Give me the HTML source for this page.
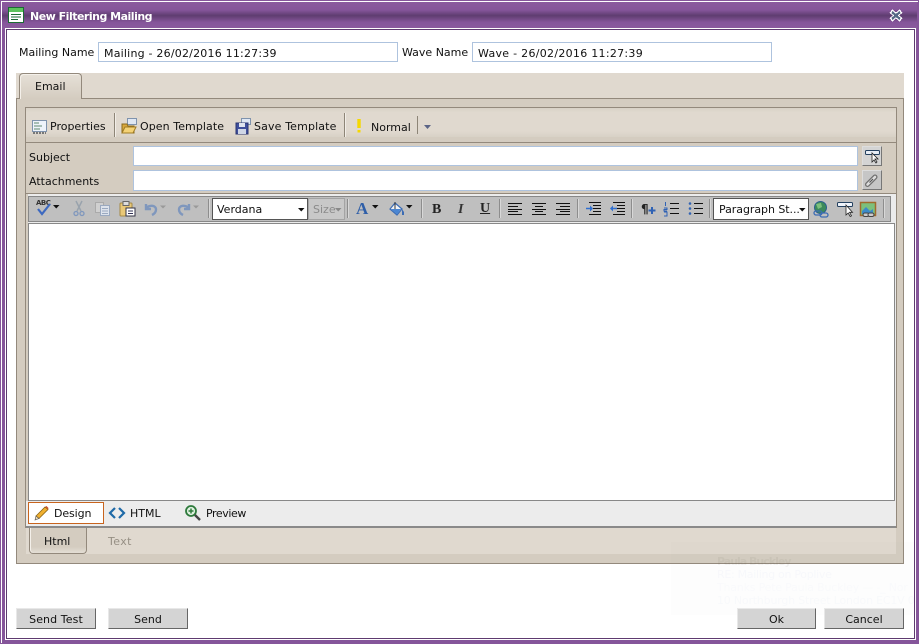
<!DOCTYPE html>
<html><head><meta charset="utf-8"><style>
html,body{margin:0;padding:0;background:#fff}
#w{position:relative;width:919px;height:644px;overflow:hidden;background:#fff;font:11px "DejaVu Sans",Verdana,sans-serif;color:#111}
.a{position:absolute;box-sizing:border-box}
.t{position:absolute;white-space:nowrap;line-height:14px;margin-top:1px}
svg{position:absolute;overflow:visible}
.inp{position:absolute;box-sizing:border-box;background:#fff;border:1px solid #aec3de}
.sep{position:absolute;width:2px;background:linear-gradient(90deg,#8d8d8d 50%,#d8d8d8 50%)}
.btn{position:absolute;box-sizing:border-box;background:#d4d4d4;border:1px solid;border-color:#e8e8e8 #666 #666 #e8e8e8;height:21px;text-align:center;line-height:21px}
</style></head><body><div id="w">
<!-- frame -->
<div class="a" style="left:0;top:0;width:919px;height:644px;background:#85559a"></div>
<div class="a" style="left:1px;top:1px;width:917px;height:642px;border:1px solid #fff;border-bottom:0;border-right:0"></div>
<div class="a" style="left:2px;top:2px;width:915px;height:27px;background:linear-gradient(#8b5a9e 0,#85559a 30%,#5f3d70 50%,#85559a 75%,#8b5a9e 100%)"></div>
<div class="a" style="left:5px;top:28px;width:911px;height:612px;background:#fff"></div>
<div class="a" style="left:6px;top:29px;width:909px;height:610px;background:#fff;border:1px solid #5e3a70"></div>
<!-- title -->
<svg style="left:8px;top:7px" width="16" height="16"><rect x=".5" y=".5" width="15" height="15" fill="#fff" stroke="#1c6b34"/><rect x="1" y="1" width="14" height="4" fill="#5cc35c"/><path d="M3 7.500h10M3 10h10M3 12.500h7" stroke="#1c6b34"/></svg>
<div class="t" style="left:30px;top:9px;color:#fff;font-weight:bold;font-size:11px;letter-spacing:-.5px">New Filtering Mailing</div>
<svg style="left:890px;top:10px" width="12" height="11" shape-rendering="crispEdges"><path d="M1 1L11 10M11 1L1 10" stroke="#fff" stroke-width="4.500"/><path d="M2 2L10 9M10 2L2 9" stroke="#566a86" stroke-width="2.400"/></svg>
<!-- names -->
<div class="t" style="left:19px;top:45px">Mailing Name</div>
<div class="inp" style="left:98px;top:42px;width:300px;height:20px"></div>
<div class="t" style="left:104px;top:46px;letter-spacing:.21px">Mailing - 26/02/2016 11:27:39</div>
<div class="t" style="left:402px;top:45px">Wave Name</div>
<div class="inp" style="left:472px;top:42px;width:300px;height:20px"></div>
<div class="t" style="left:478px;top:46px;letter-spacing:.29px">Wave - 26/02/2016 11:27:39</div>
<!-- tab strip -->
<div class="a" style="left:16px;top:73px;width:888px;height:26px;background:#e0d9cf"></div>
<div class="a" style="left:16px;top:98px;width:888px;height:466px;background:#d4ccc0;border:1px solid #93897c"></div>
<div class="a" style="left:19px;top:73px;width:63px;height:26px;background:linear-gradient(#e6e0d7,#d4ccc0);border:1px solid #93897c;border-bottom:0;border-radius:4px 4px 0 0;box-shadow:inset 1px 1px 0 #f4f0ea"></div>
<div class="t" style="left:35px;top:79px">Email</div>
<!-- inner box -->
<div class="a" style="left:25px;top:107px;width:872px;height:421px;background:#d4ccc0;border:1px solid #93897c;border-bottom:0"></div>
<div class="a" style="left:26px;top:108px;width:870px;height:29px;background:linear-gradient(#d8d1c6,#e0d9cf 15%,#e0d9cf 80%,#d8d1c6)"></div>
<div class="a" style="left:26px;top:137px;width:870px;height:5px;background:#d4ccc0"></div>
<div class="a" style="left:26px;top:142px;width:870px;height:1px;background:#93897c"></div>
<!-- main toolbar -->
<svg style="left:32px;top:120px" width="16" height="15"><rect x=".5" y=".5" width="14" height="11" fill="#eef3fa" stroke="#7f93ad"/><path d="M2 3h5M2 6h8M2 9h6" stroke="#5d8a6e"/><path d="M1 13h13" stroke="#777" stroke-width="2" stroke-dasharray="2 1"/></svg>
<div class="t" style="left:50px;top:119px">Properties</div>
<div class="sep" style="left:114px;top:113px;height:24px;background:linear-gradient(90deg,#8d8577 50%,#f2eee8 50%)"></div>
<svg style="left:121px;top:118px" width="16" height="16"><rect x="6.500" y=".5" width="9" height="6" fill="#dfe7f3" stroke="#7f93ad"/><path d="M1 6h5l1 2h6v7H1z" fill="#d9a83c" stroke="#8b6a1c"/><path d="M1 15l3-6h11l-3 6z" fill="#f4d276" stroke="#a07c24"/></svg>
<div class="t" style="left:140px;top:119px;letter-spacing:.08px">Open Template</div>
<svg style="left:235px;top:118px" width="16" height="16"><rect x="6.500" y=".5" width="9" height="6" fill="#dfe7f3" stroke="#7f93ad"/><rect x="1" y="5" width="12" height="11" fill="#3f4f9c" stroke="#2a3570"/><rect x="4" y="5" width="6" height="4" fill="#dfe4ef"/><rect x="3" y="11" width="8" height="5" fill="#cfd6e6"/></svg>
<div class="t" style="left:254px;top:119px;letter-spacing:.14px">Save Template</div>
<div class="sep" style="left:344px;top:113px;height:24px;background:linear-gradient(90deg,#8d8577 50%,#f2eee8 50%)"></div>
<svg style="left:356px;top:119px" width="6" height="14"><path d="M3 0v9" stroke="#f5d800" stroke-width="3.400"/><path d="M3 11v2.500" stroke="#f5d800" stroke-width="3"/></svg>
<div class="t" style="left:371px;top:120px">Normal</div>
<div class="a" style="left:417px;top:116px;width:1px;height:18px;background:#8d8577"></div>
<svg style="left:424px;top:125px" width="8" height="5"><path d="M0 0h7L3.500 4z" fill="#5b6486"/></svg>
<!-- subject -->
<div class="t" style="left:29px;top:150px">Subject</div>
<div class="inp" style="left:133px;top:146px;width:725px;height:20px"></div>
<div class="t" style="left:29px;top:174px">Attachments</div>
<div class="inp" style="left:133px;top:170px;width:725px;height:21px"></div>
<div class="a" style="left:862px;top:146px;width:20px;height:20px;background:#d4d4d4;border:1px solid;border-color:#ddd #777 #777 #ddd"></div>
<svg style="left:865px;top:150px" width="15" height="14"><rect x=".5" y=".5" width="14" height="4" rx="1" fill="#e8eef6" stroke="#23405f"/><path d="M7 3v9l2-2 2 3 1-1-2-3h3z" fill="#fff" stroke="#222" stroke-width=".8"/></svg>
<div class="a" style="left:862px;top:170px;width:20px;height:20px;background:#c6c6c6;border:1px solid;border-color:#ddd #777 #777 #ddd"></div>
<svg style="left:865px;top:173px" width="14" height="14"><path d="M2.500 11.500L10 4" stroke="#6e6e6e" stroke-width="5" stroke-linecap="round"/><path d="M2.500 11.500L10 4" stroke="#dcdcdc" stroke-width="2.600" stroke-linecap="round"/><path d="M4.500 9.500L8 6" stroke="#555" stroke-width="1.200"/></svg>
<!-- editor -->
<div class="a" style="left:26px;top:193px;width:870px;height:1px;background:#93897c"></div>
<div class="a" style="left:28px;top:194px;width:868px;height:307px;background:#ececec"></div>
<div class="a" style="left:28px;top:196px;width:863px;height:26px;background:#bfbfbf;border:1px solid #888"></div>
<div class="a" style="left:28px;top:223px;width:867px;height:278px;background:#fff;border:1px solid #888"></div>
<div class="a" style="left:26px;top:501px;width:870px;height:27px;background:#ececec;border-bottom:2px solid #8a8a8a"></div>
<!-- editor toolbar -->
<div class="t" style="left:36px;top:198px;font:bold 7px 'DejaVu Sans',sans-serif;line-height:8px;color:#333;letter-spacing:-.5px">ABC</div>
<svg style="left:37px;top:203px" width="17" height="13"><path d="M1 6l4 5L13 1" fill="none" stroke="#3d69c0" stroke-width="2.200"/></svg>
<svg style="left:53px;top:205px" width="7" height="4"><path d="M0 0h6.500L3.250 3.500z" fill="#111"/></svg>
<svg style="left:73px;top:201px" width="12" height="16"><path d="M3 0l5 10M9 0L4 10" stroke="#9aa3ad" stroke-width="1.500"/><circle cx="3" cy="12.500" r="2" fill="none" stroke="#7f97bd" stroke-width="1.300"/><circle cx="9" cy="12.500" r="2" fill="none" stroke="#7f97bd" stroke-width="1.300"/></svg>
<svg style="left:95px;top:202px" width="15" height="14"><rect x=".5" y=".5" width="8" height="10" fill="#d0d0d0" stroke="#aaa"/><rect x="5.500" y="3.500" width="9" height="10" fill="#dde3ec" stroke="#9aa9c0"/><path d="M7 6.500h6M7 9h6M7 11.500h6" stroke="#9aa9c0"/></svg>
<svg style="left:119px;top:201px" width="17" height="16"><rect x="1" y="2" width="12" height="13" rx="1" fill="#e9c877" stroke="#a58a46"/><rect x="4" y="0.500" width="6" height="4" fill="#ddd" stroke="#666"/><rect x="7" y="7" width="9" height="8" fill="#fff" stroke="#334"/><path d="M9 10h5M9 12.500h5" stroke="#335"/></svg>
<svg style="left:143px;top:202px" width="24" height="14"><path d="M3 2v5h5M3 6.500C6 2.500 13 3 13 7.500c0 2-1 4-4 5.500" fill="none" stroke="#7f97bd" stroke-width="2.400"/><path d="M17 3.500h6L20 6.500z" fill="#999"/></svg>
<svg style="left:176px;top:202px" width="24" height="14"><path d="M13 2v5H8M13 6.500C10 2.500 3 3 3 7.500c0 2 1 4 4 5.500" fill="none" stroke="#7f97bd" stroke-width="2.400"/><path d="M17 3.500h6L20 6.500z" fill="#999"/></svg>
<div class="sep" style="left:208px;top:199px;height:19px"></div>
<div class="a" style="left:212px;top:198px;width:96px;height:22px;background:#fff;border:1px solid #555"></div>
<div class="t" style="left:217px;top:202px">Verdana</div>
<svg style="left:298px;top:208px" width="7" height="4"><path d="M0 0h6.500L3.250 3.500z" fill="#111"/></svg>
<div class="a" style="left:308px;top:198px;width:37px;height:22px;background:#c8c8c8;border:1px solid #a4a4a4"></div>
<div class="t" style="left:313px;top:202px;color:#8b8b8b">Size</div>
<svg style="left:335px;top:208px" width="7" height="4"><path d="M0 0h6.500L3.250 3.500z" fill="#888"/></svg>
<div class="sep" style="left:347px;top:199px;height:19px"></div>
<div class="t" style="left:356px;top:200px;font:bold 17px/16px 'Liberation Serif',serif;color:#2e5ea8">A</div>
<svg style="left:372px;top:205px" width="7" height="4"><path d="M0 0h6.500L3.250 3.500z" fill="#111"/></svg>
<svg style="left:389px;top:201px" width="16" height="16"><path d="M6 2l7 6-5 6-7-6z" fill="#f0f3f8" stroke="#3c6cb4" stroke-width="1.200"/><path d="M2 8h10l-4 5.500z" fill="#4b86d2"/><path d="M6 1v7" stroke="#333"/><path d="M13 8l2 3v3h-2" fill="#3c6cb4"/></svg>
<svg style="left:406px;top:205px" width="7" height="4"><path d="M0 0h6.500L3.250 3.500z" fill="#111"/></svg>
<div class="sep" style="left:421px;top:199px;height:19px"></div>
<div class="t" style="left:432px;top:202px;font:bold 14px/14px 'Liberation Serif',serif;color:#222">B</div>
<div class="t" style="left:458px;top:202px;font:italic bold 14px/14px 'Liberation Serif',serif;color:#333">I</div>
<div class="t" style="left:480px;top:201px;font:bold 14px/14px 'Liberation Serif',serif;color:#222;text-decoration:underline">U</div>
<div class="sep" style="left:499px;top:199px;height:19px"></div>
<svg style="left:508px;top:203px" width="15" height="12" shape-rendering="crispEdges"><path d="M0 .5h14M0 3.500h10M0 6.500h14M0 8.500h10M0 11.500h14" stroke="#111"/></svg>
<svg style="left:532px;top:203px" width="15" height="12" shape-rendering="crispEdges"><path d="M0 .5h14M3 3.500h8M0 6.500h14M3 8.500h8M0 11.500h14" stroke="#111"/></svg>
<svg style="left:556px;top:203px" width="15" height="12" shape-rendering="crispEdges"><path d="M0 .5h14M4 3.500h10M0 6.500h14M4 8.500h10M0 11.500h14" stroke="#111"/></svg>
<div class="sep" style="left:577px;top:199px;height:19px"></div>
<svg style="left:586px;top:202px" width="16" height="14"><path d="M3 .5h12M7 3.500h8M7 6.500h8M7 9.500h8M3 12.500h12" stroke="#111"/><path d="M0 6.500h5" stroke="#2f6fd0" stroke-width="1.500"/><path d="M4 3.500l3 3-3 3z" fill="#2f6fd0"/></svg>
<svg style="left:610px;top:202px" width="16" height="14"><path d="M3 .5h12M7 3.500h8M7 6.500h8M7 9.500h8M3 12.500h12" stroke="#111"/><path d="M2 6.500h5" stroke="#2f6fd0" stroke-width="1.500"/><path d="M3 3.500l-3 3 3 3z" fill="#2f6fd0"/></svg>
<div class="sep" style="left:631px;top:199px;height:19px"></div>
<div class="t" style="left:641px;top:201px;font:bold 12px/14px 'DejaVu Sans',sans-serif;color:#222">¶</div>
<svg style="left:648px;top:206px" width="8" height="9"><path d="M4 1v7M.5 4.500h7" stroke="#2f62b4" stroke-width="2"/></svg>
<svg style="left:664px;top:202px" width="15" height="14"><path d="M6 1.500h9M6 6.500h9M6 11.500h9" stroke="#111"/><path d="M1.500 0v4M0 6h3v1.500H0V9h3M0 10h3v4H0" fill="none" stroke="#2f62b4"/></svg>
<svg style="left:688px;top:202px" width="15" height="14"><path d="M6 1.500h9M6 6.500h9M6 11.500h9" stroke="#111"/><circle cx="2" cy="1.500" r="1.300" fill="#2f62b4"/><circle cx="2" cy="6.500" r="1.300" fill="#2f62b4"/><circle cx="2" cy="11.500" r="1.300" fill="#2f62b4"/></svg>
<div class="sep" style="left:709px;top:199px;height:19px"></div>
<div class="a" style="left:713px;top:198px;width:96px;height:22px;background:#fff;border:1px solid #555"></div>
<div class="t" style="left:719px;top:202px;letter-spacing:-.05px">Paragraph St...</div>
<svg style="left:799px;top:208px" width="7" height="4"><path d="M0 0h6.500L3.250 3.500z" fill="#111"/></svg>
<svg style="left:813px;top:201px" width="16" height="17"><circle cx="7.500" cy="6.500" r="6" fill="#3c8a5c" stroke="#2a5f8f"/><path d="M3 3l5-1 1 4-4 2z" fill="#7cc07c"/><rect x="1" y="10" width="8" height="4" rx="2" fill="none" stroke="#3c6cb4" stroke-width="1.300"/><rect x="7" y="12" width="8" height="4" rx="2" fill="none" stroke="#3c6cb4" stroke-width="1.300"/></svg>
<svg style="left:837px;top:202px" width="16" height="15"><rect x=".5" y=".5" width="15" height="4" rx="1" fill="#f0f4fa" stroke="#23405f"/><path d="M9 3v10l2.200-2 2 3.500 1.300-.7-2-3.500h3z" fill="#fff" stroke="#222" stroke-width=".8"/></svg>
<svg style="left:860px;top:202px" width="16" height="15"><rect x=".5" y=".5" width="15" height="13" fill="#7cc07c" stroke="#a06a2c" stroke-width="1.500"/><path d="M2 9l4-4 4 4 3-2v5H2z" fill="#3c8ac8"/><rect x="3" y="11" width="6" height="3.500" rx="1.700" fill="#ccc" stroke="#444"/><rect x="8" y="11" width="6" height="3.500" rx="1.700" fill="#ccc" stroke="#444"/></svg>
<div class="sep" style="left:883px;top:199px;height:19px"></div>
<!-- design bar -->
<div class="a" style="left:28px;top:502px;width:76px;height:22px;background:#fff;border:1px solid #c8641e"></div>
<svg style="left:34px;top:505px" width="15" height="16"><path d="M2 11L11 2l3 2.500L5 13.500z" fill="#f0b030" stroke="#8a6414" stroke-width=".8"/><path d="M11 2l3 2.500 .5-1.500-2-2z" fill="#c8552e"/><path d="M2 11l-1 4 4-1.500z" fill="#f0dcb4" stroke="#555" stroke-width=".6"/></svg>
<div class="t" style="left:54px;top:506px;letter-spacing:-.1px">Design</div>
<svg style="left:109px;top:507px" width="16" height="12"><path d="M6 1L1 6l5 5M10 1l5 5-5 5" fill="none" stroke="#1f6aa8" stroke-width="2.200"/></svg>
<div class="t" style="left:130px;top:506px">HTML</div>
<svg style="left:185px;top:505px" width="16" height="16"><circle cx="6" cy="6" r="5" fill="#dff0df" stroke="#2e7a3c" stroke-width="1.800"/><path d="M6 3.500v5M3.500 6h5" stroke="#2e7a3c" stroke-width="1.500"/><path d="M10 10l5 5" stroke="#444" stroke-width="2.400"/></svg>
<div class="t" style="left:206px;top:506px;letter-spacing:-.4px">Preview</div>
<!-- lower tabs -->
<div class="a" style="left:26px;top:528px;width:870px;height:26px;background:#e0d9cf"></div>
<div class="a" style="left:29px;top:528px;width:58px;height:26px;background:linear-gradient(#d4ccc0 75%,#e4ded5);border:1px solid #93897c;border-top:0;border-radius:0 0 4px 4px;box-shadow:inset 1px 0 0 #f4f0ea"></div>
<div class="t" style="left:44px;top:534px">Html</div>
<div class="t" style="left:108px;top:534px;color:#968f84;letter-spacing:.4px">Text</div>
<!-- ghost notification -->
<div class="a" style="left:671px;top:542px;width:248px;height:73px;background:rgba(130,130,150,.02)"></div>
<div class="t" style="left:717px;top:554px;color:rgba(70,60,50,.06);font-weight:bold;letter-spacing:-1px">Paula Buckley</div>
<div class="t" style="left:717px;top:567px;color:#f7f8fb;letter-spacing:-.3px">RE: Mailing on Poplive</div>
<div class="t" style="left:717px;top:580px;color:#f9fafc;letter-spacing:-.2px">Thanks Pete  Paula Buckley — -_  Nor</div>
<div class="t" style="left:717px;top:593px;color:#f8f9fb;letter-spacing:-.2px">10 Northburgh Street  London  EC1V 0</div>
<!-- buttons -->
<div class="btn" style="left:16px;top:608px;width:80px;letter-spacing:.1px">Send Test</div>
<div class="btn" style="left:108px;top:608px;width:80px">Send</div>
<div class="btn" style="left:737px;top:608px;width:79px">Ok</div>
<div class="btn" style="left:824px;top:608px;width:80px">Cancel</div>
</div></body></html>
